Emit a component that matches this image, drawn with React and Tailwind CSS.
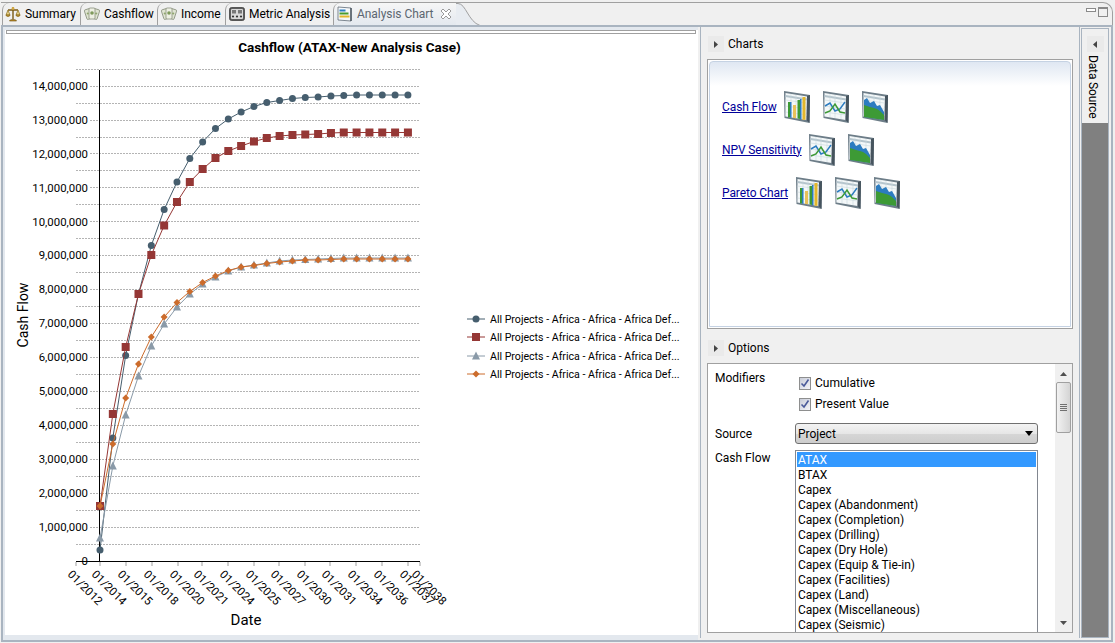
const tickX = [76, 100, 126, 152, 178, 202, 228, 254, 279, 305, 330, 356, 382, 408, 420];
const dateLabels = ["01/2012", "01/2014", "01/2015", "01/2018", "01/2020", "01/2021", "01/2024", "01/2025", "01/2027", "01/2030", "01/2031", "01/2034", "01/2036", "01/2037", "01/2038"];
const yLabels = ["0", "1,000,000", "2,000,000", "3,000,000", "4,000,000", "5,000,000", "6,000,000", "7,000,000", "8,000,000", "9,000,000", "10,000,000", "11,000,000", "12,000,000", "13,000,000", "14,000,000"];

const toPoints = (ys) => ys.map((y, i) => [100 + i * 12.83, y]);

const seriesBlue = toPoints([550, 438, 355.5, 294, 245.5, 209.5, 182, 158.5, 142, 128.5, 119, 112, 106.5, 102.5, 100.5, 98.5, 97.5, 97, 96, 95.5, 95, 95, 95, 95, 95]);
const seriesRed = toPoints([506, 414, 347, 294, 255, 225.5, 202, 182, 169, 158, 151, 146, 141.5, 138, 136, 135, 134.5, 134, 133, 132.5, 132.5, 132.5, 132.5, 132.5, 132.5]);
const seriesGray = toPoints([538, 466, 415, 376, 346, 324, 307, 294, 284, 277, 271, 267, 265, 263, 261, 260, 259.5, 259, 258.5, 258, 258, 258, 258, 258, 258]);
const seriesOrange = toPoints([506, 444, 398, 364, 337, 317, 302.5, 291.5, 282.5, 276, 270.5, 267, 265.5, 263.5, 262, 261, 260, 260, 259.5, 259, 259, 259, 259, 259, 259]);

const Marker = ({ type, x, y, color }) => {
  if (type === "circle") return <circle cx={x} cy={y} r="3.5" fill={color} />;
  if (type === "square") return <rect x={x - 4} y={y - 4} width="8" height="8" fill={color} />;
  if (type === "triangle") return <polygon points={`${x},${y - 4.5} ${x + 4},${y + 3.5} ${x - 4},${y + 3.5}`} fill={color} />;
  return <polygon points={`${x},${y - 3.5} ${x + 3.5},${y} ${x},${y + 3.5} ${x - 3.5},${y}`} fill={color} />;
};

const chartSeries = [
  { points: seriesBlue, type: "circle", color: "#465e6e", legendY: 319 },
  { points: seriesRed, type: "square", color: "#953735", legendY: 337 },
  { points: seriesGray, type: "triangle", color: "#8a9aa8", legendY: 356 },
  { points: seriesOrange, type: "diamond", color: "#cc6c2c", legendY: 374 },
];

const CashflowChart = () => {
  const grid = [];
  for (let i = 1; i <= 29; i++) {
    const y = Math.round(561 - i * 16.98) + 0.5;
    grid.push({ y, x: i % 2 === 0 ? 90 : 76 });
  }
  return (
    <svg viewBox="5 34 693 601" className="block w-[693px] h-[601px] bg-white">
      <text x="349.5" y="52" textAnchor="middle" fontSize="13.5" fontWeight="700" fill="#000">
        Cashflow (ATAX-New Analysis Case)
      </text>
      {grid.map((g) => (
        <line key={g.y} x1={g.x} x2="420" y1={g.y} y2={g.y} stroke="#b4b4b4" strokeDasharray="2 1" />
      ))}
      {yLabels.map((label, i) => (
        <text key={label} x="88" y={561 - i * 33.95 + 4} textAnchor="end" fontSize="11.4" fill="#000">
          {label}
        </text>
      ))}
      <line x1="99.5" x2="99.5" y1="70" y2="561" stroke="#000" />
      <line x1="76" x2="420" y1="561.5" y2="561.5" stroke="#000" />
      {tickX.map((x, i) => (
        <g key={x}>
          <line x1={x} x2={x} y1="562" y2="566" stroke="#a0a0a0" />
          <text transform={`translate(${x - 9} 575) rotate(45)`} fontSize="11.5" fill="#000">
            {dateLabels[i]}
          </text>
        </g>
      ))}
      <text transform="translate(28 315) rotate(-90)" textAnchor="middle" fontSize="14" fill="#000">
        Cash Flow
      </text>
      <text x="246" y="625" textAnchor="middle" fontSize="15" fill="#000">
        Date
      </text>
      {chartSeries.map((s) => (
        <g key={s.type}>
          <polyline points={s.points.map((p) => p.join(",")).join(" ")} fill="none" stroke={s.color} />
          {s.points.map(([x, y]) => (
            <Marker key={x} type={s.type} x={x} y={y} color={s.color} />
          ))}
          <line x1="467" x2="485" y1={s.legendY} y2={s.legendY} stroke={s.color} />
          <Marker type={s.type} x={476} y={s.legendY} color={s.color} />
          <text x="490" y={s.legendY + 4} fontSize="10.6" fill="#000">
            All Projects - Africa - Africa - Africa Def...
          </text>
        </g>
      ))}
    </svg>
  );
};

const ScaleIcon = () => (
  <svg viewBox="0 0 16 16" className="w-4 h-4 shrink-0">
    <path d="M8 1v12M3 4h10" stroke="#7a5a14" strokeWidth="1.4" fill="none" />
    <path d="M3 4 1 9h4zM13 4l-2 5h4z" fill="#e8d48a" stroke="#8a6a1c" strokeWidth="0.7" />
    <path d="M1 9c0 2 4 2 4 0zM11 9c0 2 4 2 4 0z" fill="#c49a32" stroke="#7a5a14" strokeWidth="0.6" />
    <path d="M4.5 15c0-2 7-2 7 0z" fill="#b88a26" stroke="#6e5012" strokeWidth="0.6" />
    <circle cx="8" cy="2.5" r="1.4" fill="#d4aa44" />
  </svg>
);

const CardsIcon = () => (
  <svg viewBox="0 0 16 16" className="w-4 h-4 shrink-0">
    <rect x="1.5" y="3" width="6" height="10" rx="1" transform="rotate(-18 4.5 8)" fill="#dfe4d2" stroke="#7c8470" strokeWidth="0.7" />
    <rect x="8.5" y="3" width="6" height="10" rx="1" transform="rotate(18 11.5 8)" fill="#dfe4d2" stroke="#7c8470" strokeWidth="0.7" />
    <rect x="5" y="2" width="6" height="11" rx="1" fill="#eef0e4" stroke="#7c8470" strokeWidth="0.7" />
    <circle cx="8" cy="7" r="1.8" fill="#7f9a5c" />
    <circle cx="3.8" cy="7.5" r="1.1" fill="#8fa46e" />
    <circle cx="12.2" cy="7.5" r="1.1" fill="#8fa46e" />
  </svg>
);

const MetricIcon = () => (
  <svg viewBox="0 0 16 16" className="w-4 h-4 shrink-0">
    <rect x="0.5" y="1.5" width="15" height="13" rx="2" fill="#5c5c5c" stroke="#333" strokeWidth="0.7" />
    <rect x="2" y="3" width="12" height="10" rx="1" fill="#d8d8d8" />
    <rect x="3" y="4" width="4" height="3.5" fill="#777" />
    <rect x="9" y="4" width="4" height="3.5" fill="#777" />
    <circle cx="4" cy="10.5" r="1.1" fill="#333" />
    <circle cx="8" cy="10.5" r="1.1" fill="#333" />
    <circle cx="12" cy="10.5" r="1.1" fill="#333" />
  </svg>
);

const AnalysisIcon = () => (
  <svg viewBox="0 0 16 16" className="w-4 h-4 shrink-0">
    <path d="M1 1l13 1v13l-13-1z" fill="#f6f8fa" stroke="#5f6b76" strokeWidth="0.8" />
    <rect x="2.5" y="3.5" width="6" height="2" fill="#2f7fc4" />
    <rect x="2.5" y="6.5" width="9" height="2" fill="#4a9c2e" />
    <rect x="2.5" y="9.5" width="10" height="2" fill="#e3b72c" />
    <path d="M14 2v13" stroke="#37424c" strokeWidth="1.2" />
  </svg>
);

const ChartTile = ({ kind }) => (
  <svg viewBox="0 0 26 32" className="w-[26px] h-[32px] shrink-0">
    <path d="M0 0l26 4-.5 28L.5 27z" fill="#6d7d88" />
    <path d="M1.5 2 23 5.5l-.4 23.5-21.2-3.4z" fill="#f4f8f9" />
    <path d="M23 5l3-1-.5 28-3-3z" fill="#46545e" />
    <path d="M1.5 5 23 8.5" stroke="#b4c4cc" strokeWidth="2" />
    <path d="M7 3v23M12 4v23M18 5v23M1.5 9l21 3M1.5 15l21 3M1.5 21l21 3" stroke="#c9d8de" strokeWidth="0.6" fill="none" />
    {kind === "bars" && (
      <>
        <path d="M4 11h2v15.5l-2-.3z" fill="#3d9a35" />
        <path d="M6 11h1.5v15.7H6z" fill="#2c7cc0" />
        <path d="M9 14h3v13.3l-3-.4z" fill="#e8c15a" />
        <path d="M13.5 9h2.5v19l-2.5-.4z" fill="#3d9a35" />
        <path d="M16 8h1.5v20.2H16z" fill="#2c7cc0" />
        <path d="M18.5 6h3v22.8h-3z" fill="#e3b72c" />
      </>
    )}
    {kind === "lines" && (
      <>
        <path d="M2 15l5-3 5 8 5-2 5-7" stroke="#2c7cc0" strokeWidth="1.5" fill="none" />
        <path d="M2 22l5-2 5-7 5 8 5 1" stroke="#3d9a35" strokeWidth="1.5" fill="none" />
      </>
    )}
    {kind === "area" && (
      <>
        <path d="M2 9l3-2 3 5 4-2 3 5 3-1 4 7v8l-20-3z" fill="#2c7cc0" />
        <path d="M2 14l3 1 3 1 4 1 3 1 3 2 4 4v5L2 26z" fill="#3d9a35" />
      </>
    )}
  </svg>
);

const SectionHeader = ({ label }) => (
  <div className="flex items-center h-[16px] gap-1 ml-px">
    <div className="w-[16px] h-[16px] bg-[#eaeaea] flex items-center justify-center">
      <svg viewBox="0 0 4 7" className="w-[4px] h-[7px]">
        <path d="M0 0l4 3.5L0 7z" fill="#444" />
      </svg>
    </div>
    <span>{label}</span>
  </div>
);

const chartLinks = [
  { label: "Cash Flow", width: "w-[62px]", tiles: ["bars", "lines", "area"] },
  { label: "NPV Sensitivity", width: "w-[87px]", tiles: ["lines", "area"] },
  { label: "Pareto Chart", width: "w-[74px]", tiles: ["bars", "lines", "area"] },
];

const cashFlowItems = ["BTAX", "Capex", "Capex (Abandonment)", "Capex (Completion)", "Capex (Drilling)", "Capex (Dry Hole)", "Capex (Equip & Tie-in)", "Capex (Facilities)", "Capex (Land)", "Capex (Miscellaneous)", "Capex (Seismic)"];

const Check = ({ label }) => (
  <div className="flex items-center h-[16px] gap-[4px]">
    <div className="w-[12px] h-[13px] border border-[#8e8f8f] bg-[linear-gradient(135deg,#c8ccd8,#f4f4f8)] flex items-center justify-center">
      <svg viewBox="0 0 10 10" className="w-[10px] h-[10px]">
        <path d="M1.5 5.5 4 8l4.5-6.5" stroke="#4a5a9a" strokeWidth="1.6" fill="none" />
      </svg>
    </div>
    <span>{label}</span>
  </div>
);

const App = () => {
  return (
    <div className="w-[1115px] h-[643px] overflow-hidden bg-[#f0f0f0] pt-[2px] pl-px pr-[2px] pb-px flex flex-col font-[Roboto,sans-serif] text-[12px] leading-[15px] text-black">
      {/* Tab bar */}
      <div className="h-[23px] flex border-t border-r border-[#a0a0a0] rounded-tr-[10px] pl-px">
        {[
          { label: "Summary", Icon: ScaleIcon, width: "w-[78px]", pad: "pl-[2px]" },
          { label: "Cashflow", Icon: CardsIcon, width: "w-[77px]", pad: "pl-[3px]" },
          { label: "Income", Icon: CardsIcon, width: "w-[68px]", pad: "pl-[3px]" },
          { label: "Metric Analysis", Icon: MetricIcon, width: "w-[108px]", pad: "pl-[3px]" },
        ].map((tab) => (
          <div key={tab.label} className={`${tab.width} ${tab.pad} flex items-center gap-[4px] border-l border-[#a0a0a0] rounded-tl-[7px] tracking-[-0.05px] whitespace-nowrap`}>
            <tab.Icon />
            <span>{tab.label}</span>
          </div>
        ))}
        <div className="w-[124px] flex items-center gap-[4px] pl-[3px] border-l border-[#a0a0a0] rounded-tl-[7px] bg-linear-to-b from-[#f6f6f6] to-[#e4e9ef] text-[#5c6670] tracking-[-0.05px] whitespace-nowrap">
          <AnalysisIcon />
          <span>Analysis Chart</span>
          <svg viewBox="0 0 12 12" className="w-[12px] h-[12px] ml-[3px]">
            <path d="M1 3l2-2 3 3 3-3 2 2-3 3 3 3-2 2-3-3-3 3-2-2 3-3z" fill="#fff" stroke="#9a9a9a" />
          </svg>
        </div>
        <svg viewBox="0 0 24 23" className="w-[24px] h-[23px] -ml-px">
          <path d="M0 0h2c8 0 10 18 22 22v1H0z" fill="#e8ecf1" />
          <path d="M0 .5h2c8 0 10 18 22 22" fill="none" stroke="#a0a0a0" />
        </svg>
        <div className="ml-auto flex gap-[2px] pt-[4px] pr-[4px]">
          <div className="w-[10px] h-[4px] border border-[#8a8a8a] bg-white mt-px" />
          <div className="w-[10px] h-[10px] border border-[#8a8a8a] border-t-2" />
        </div>
      </div>
      <div className="h-[2px] bg-[#a9b4c0]" />

      {/* Body */}
      <div className="flex-1 flex min-h-0 border-l-2 border-r-2 border-b-2 border-[#a9b4c0] bg-[#f0f0f0]">
        <div className="w-[695px] pl-[2px] pt-[3px] pb-[5px] bg-[#e3e8ee]">
          <div className="bg-white w-[693px]">
            <div className="h-[4px] border border-[#a0a0a0] mx-px w-[690px]" />
            <CashflowChart />
          </div>
        </div>
        <div className="w-[2px]" />
        <div className="w-[380px] border-x border-[#a9b4c0] pt-[9px] pl-[6px] mb-[2px]">
          <SectionHeader label="Charts" />
          <div className="mt-[7px] w-[366px] h-[270px] border border-[#a0a0a0] bg-white p-px">
            <div className="h-full border border-[#c5d2e3] rounded-t-[4px] bg-[linear-gradient(#dfe7f2,#fff_24px)] pt-[29px] pl-[12px] flex flex-col gap-[11px]">
              {chartLinks.map((row) => (
                <div key={row.label} className="flex items-center h-[32px]">
                  <a href="#" className={`${row.width} underline text-[#000099] tracking-[-0.1px]`}>
                    {row.label}
                  </a>
                  <div className="flex gap-[13px]">
                    {row.tiles.map((t) => (
                      <ChartTile key={t} kind={t} />
                    ))}
                  </div>
                </div>
              ))}
            </div>
          </div>

          <div className="mt-[11px]">
            <SectionHeader label="Options" />
          </div>
          <div className="mt-[7px] w-[366px] h-[270px] border border-[#a0a0a0] bg-white flex">
            <div className="flex-1 min-w-0 pl-[7px] pt-[6px] overflow-hidden">
              <div className="flex">
                <div className="w-[80px] leading-[17px]">Modifiers</div>
                <div className="pl-[4px] pt-[5px] flex flex-col gap-[5px]">
                  <Check label="Cumulative" />
                  <Check label="Present Value" />
                </div>
              </div>
              <div className="flex items-center mt-[11px] h-[21px]">
                <div className="w-[80px] pt-[2px]">Source</div>
                <div className="w-[243px] h-[21px] border border-[#707070] rounded-[3px] bg-[linear-gradient(#f3f3f3,#e6e6e6_50%,#d6d6d6_50%,#cdcdcd)] flex items-center justify-between pl-[2px] pr-[4px]">
                  <span className="pt-[2px]">Project</span>
                  <svg viewBox="0 0 8 5" className="w-[8px] h-[5px]">
                    <path d="M0 0h8L4 5z" fill="#000" />
                  </svg>
                </div>
              </div>
              <div className="flex mt-[6px]">
                <div className="w-[80px] leading-[17px]">Cash Flow</div>
                <div className="w-[243px] h-[182px] border-x border-t border-[#828790] pt-px px-px overflow-hidden leading-[17px]">
                  <div className="h-[15px] bg-[#3399ff] text-white pl-px">ATAX</div>
                  {cashFlowItems.map((item) => (
                    <div key={item} className="h-[15px] pl-px">
                      {item}
                    </div>
                  ))}
                </div>
              </div>
            </div>
            <div className="w-[17px] bg-[#f0f0f0] flex flex-col items-center">
              <svg viewBox="0 0 7 4" className="w-[7px] h-[4px] mt-[8px]">
                <path d="M0 4h7L3.5 0z" fill="#505050" />
              </svg>
              <div className="w-[15px] h-[51px] mt-[6px] border border-[#a0a0a0] rounded-[2px] bg-linear-to-r from-[#f2f2f2] to-[#d4d4d4] flex flex-col items-center justify-center gap-px">
                <div className="w-[7px] h-px bg-[#707070]" />
                <div className="w-[7px] h-px bg-[#707070]" />
                <div className="w-[7px] h-px bg-[#707070]" />
                <div className="w-[7px] h-px bg-[#707070]" />
              </div>
              <svg viewBox="0 0 7 4" className="w-[7px] h-[4px] mt-auto mb-[7px]">
                <path d="M0 0h7L3.5 4z" fill="#505050" />
              </svg>
            </div>
          </div>
        </div>

        {/* Data Source fast view */}
        <div className="w-[28px] ml-px mt-px mb-[2px] border border-[#a9b4c0] flex flex-col">
          <div className="h-[94px] bg-[#f0f0f0] flex flex-col items-center">
            <div className="w-[17px] h-[16px] mt-[7px] bg-[#eaeaea] flex items-center justify-center">
              <svg viewBox="0 0 4 7" className="w-[4px] h-[7px]">
                <path d="M4 0 0 3.5 4 7z" fill="#444" />
              </svg>
            </div>
            <span className="[writing-mode:vertical-rl] mt-[3px] mr-[5px] tracking-[-0.15px]">Data Source</span>
          </div>
          <div className="flex-1 bg-[#808080]" />
        </div>
      </div>
    </div>
  );
};

export default App;
